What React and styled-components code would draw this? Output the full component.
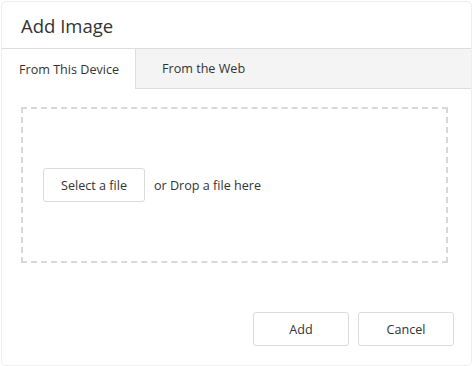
import styled, { createGlobalStyle } from 'styled-components';

const GlobalStyle = createGlobalStyle`
  html, body {
    margin: 0;
    padding: 0;
    background: #ffffff;
  }
  body {
    font-family: "Open Sans", "Noto Sans", sans-serif;
    color: #333333;
  }
`;

const Dialog = styled.div`
  box-sizing: border-box;
  width: 471px;
  height: 365px;
  margin: 1px 0 0 1px;
  border: 1px solid #ededed;
  border-radius: 5px;
  background: #ffffff;
  display: flex;
  flex-direction: column;
  overflow: hidden;
`;

const Header = styled.div`
  height: 46px;
  padding-left: 19px;
  display: flex;
  align-items: center;
  font-size: 18.5px;
  color: #333333;
`;

const Tabs = styled.div`
  display: flex;
  height: 41px;
  border-top: 1px solid #dddddd;
  box-sizing: border-box;
`;

const Tab = styled.div`
  box-sizing: border-box;
  display: flex;
  align-items: center;
  font-size: 12.6px;
  color: #333333;
  padding-left: ${(p) => (p.$active ? '17px' : '26px')};
  width: ${(p) => (p.$active ? '133px' : 'auto')};
  flex: ${(p) => (p.$active ? 'none' : '1')};
  background: ${(p) => (p.$active ? '#ffffff' : '#f4f4f4')};
  border-left: ${(p) => (p.$active ? 'none' : '1px solid #dddddd')};
  border-bottom: ${(p) => (p.$active ? 'none' : '1px solid #dddddd')};
`;

const Body = styled.div`
  flex: 1;
  padding: 18px 23px 0 19px;
`;

const DropZone = styled.div`
  box-sizing: border-box;
  height: 156px;
  border: 2px dashed #d8d8d8;
  display: flex;
  align-items: center;
  padding-left: 20px;
  gap: 9px;
  font-size: 12.6px;
`;

const Button = styled.button`
  box-sizing: border-box;
  height: 34px;
  width: ${(p) => p.$width || 'auto'};
  padding: 0 17px;
  border: 1px solid #dcdcdc;
  border-radius: 3px;
  background: #ffffff;
  font-family: "Open Sans", "Noto Sans", sans-serif;
  font-size: 12.6px;
  color: #333333;
  cursor: pointer;
`;

const Footer = styled.div`
  display: flex;
  justify-content: flex-end;
  gap: 9px;
  padding: 0 17px 19px 0;
`;

export default function App() {
  return (
    <>
      <GlobalStyle />
      <Dialog>
        <Header>Add Image</Header>
        <Tabs>
          <Tab $active>From This Device</Tab>
          <Tab>From the Web</Tab>
        </Tabs>
        <Body>
          <DropZone>
            <Button>Select a file</Button>
            <span>or Drop a file here</span>
          </DropZone>
        </Body>
        <Footer>
          <Button $width="96px">Add</Button>
          <Button $width="96px">Cancel</Button>
        </Footer>
      </Dialog>
    </>
  );
}
